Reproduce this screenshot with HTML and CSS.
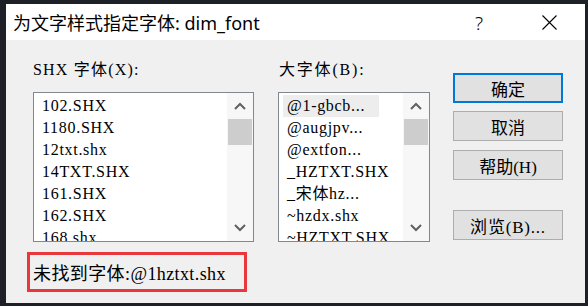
FILE: index.html
```html
<!DOCTYPE html>
<html lang="zh-CN">
<head>
    <meta charset="UTF-8">
    <title>为文字样式指定字体</title>
    <link rel="stylesheet" href="styles.css">
</head>
<body>
    <div class="window">
        <div class="titlebar">
            <span class="title">为文字样式指定字体: dim_font</span>
            <span class="title-btn help">?</span>
            <span class="title-btn close">
                <svg width="15" height="15" viewBox="0 0 15 15">
                    <path d="M0.5 0.5 L14.5 14.5 M14.5 0.5 L0.5 14.5" stroke="#000" stroke-width="1.1" fill="none"/>
                </svg>
            </span>
        </div>

        <div class="content">
            <div class="main">
                <div class="group group-shx">
                    <div class="label">SHX 字体(X):</div>
                    <div class="listbox">
                        <ul class="items">
                            <li>102.SHX</li>
                            <li>1180.SHX</li>
                            <li>12txt.shx</li>
                            <li>14TXT.SHX</li>
                            <li>161.SHX</li>
                            <li>162.SHX</li>
                            <li>168.shx</li>
                        </ul>
                        <div class="scrollbar">
                            <div class="arrow">
                                <svg width="12" height="8" viewBox="0 0 12 8"><polyline points="1,7 6,2 11,7" fill="none" stroke="#606060" stroke-width="2"/></svg>
                            </div>
                            <div class="thumb"></div>
                            <div class="track"></div>
                            <div class="arrow">
                                <svg width="12" height="8" viewBox="0 0 12 8"><polyline points="1,1 6,6 11,1" fill="none" stroke="#606060" stroke-width="2"/></svg>
                            </div>
                        </div>
                    </div>
                </div>

                <div class="group group-big">
                    <div class="label">大字体(B):</div>
                    <div class="listbox">
                        <ul class="items">
                            <li class="selected">@1-gbcb...</li>
                            <li>@augjpv...</li>
                            <li>@extfon...</li>
                            <li>_HZTXT.SHX</li>
                            <li>_宋体hz...</li>
                            <li>~hzdx.shx</li>
                            <li>~HZTXT.SHX</li>
                        </ul>
                        <div class="scrollbar">
                            <div class="arrow">
                                <svg width="12" height="8" viewBox="0 0 12 8"><polyline points="1,7 6,2 11,7" fill="none" stroke="#606060" stroke-width="2"/></svg>
                            </div>
                            <div class="thumb"></div>
                            <div class="track"></div>
                            <div class="arrow">
                                <svg width="12" height="8" viewBox="0 0 12 8"><polyline points="1,1 6,6 11,1" fill="none" stroke="#606060" stroke-width="2"/></svg>
                            </div>
                        </div>
                    </div>
                </div>

                <div class="buttons">
                    <button class="btn default">确定</button>
                    <button class="btn btn-cancel">取消</button>
                    <button class="btn btn-help">帮助(H)</button>
                    <button class="btn btn-browse">浏览(B)...</button>
                </div>
            </div>

            <div class="status">未找到字体:@1hztxt.shx</div>
        </div>
    </div>
</body>
</html>
```

FILE: styles.css
```css
* {
    margin: 0;
    padding: 0;
    box-sizing: border-box;
}

body {
    background-color: #1d2127;
    width: 588px;
    height: 306px;
    overflow: hidden;
    font-family: 'Liberation Serif', 'Noto Sans CJK SC', serif;
    color: #000;
}

.window {
    width: 579px;
    height: 299px;
    margin: 4px 0 0 6px;
    display: flex;
    flex-direction: column;
    background: #f0f0f0;
}

.titlebar {
    height: 36px;
    background: #ffffff;
    display: flex;
    align-items: center;
    padding: 0 13px 0 7px;
    font-family: 'Noto Sans', 'Noto Sans CJK SC', sans-serif;
}

.title {
    font-size: 18px;
    flex: 1;
}

.title-btn {
    width: 46px;
    height: 36px;
    display: flex;
    align-items: center;
    justify-content: center;
}

.help {
    font-size: 19px;
    font-weight: 300;
    padding-top: 1px;
    margin-right: 24px;
}

.content {
    flex: 1;
    padding-top: 20px;
}

.main {
    display: flex;
    padding-left: 27px;
}

.label {
    font-size: 16px;
    line-height: 20px;
    height: 20px;
    margin-bottom: 12px;
    white-space: pre;
    letter-spacing: 1.2px;
}

.group-shx {
    width: 221px;
}

.group-big {
    width: 152px;
    margin-left: 24px;
}

.group-big .label {
    padding-left: 1px;
    letter-spacing: 1.8px;
}

.listbox {
    height: 150px;
    border: 1px solid #828790;
    background: #ffffff;
    display: flex;
    overflow: hidden;
}

.items {
    list-style: none;
    flex: 1;
    padding: 2px 0 0 4px;
    overflow: hidden;
}

.items li {
    font-size: 16px;
    line-height: 22px;
    height: 22px;
    padding-left: 4px;
    white-space: nowrap;
    letter-spacing: 0.7px;
}

.items li.selected {
    width: 96px;
    background: #ededed;
}

.scrollbar {
    width: 26px;
    display: flex;
    flex-direction: column;
    background: #f7f7f7;
    padding-right: 1px;
}

.arrow {
    height: 26px;
    display: flex;
    align-items: center;
    justify-content: center;
}

.thumb {
    height: 26px;
    margin-left: 1px;
    background: #cdcdcd;
}

.track {
    flex: 1;
}

.buttons {
    display: flex;
    flex-direction: column;
    margin: 13px 0 0 23px;
}

.btn {
    width: 110px;
    height: 30px;
    background: #e1e1e1;
    border: 1px solid #adadad;
    font-family: 'Liberation Serif', 'Noto Sans CJK SC', serif;
    font-size: 17px;
    color: #000;
}

.btn.default {
    border: 2px solid #0078d7;
}

.btn-cancel {
    margin-top: 8px;
}

.btn-help {
    margin-top: 9px;
}

.btn-browse {
    margin-top: 30px;
    letter-spacing: 0.8px;
}

.status {
    width: 220px;
    height: 40px;
    margin: 10px 0 0 21px;
    border: 3px solid #e8383c;
    padding-left: 3px;
    display: flex;
    align-items: center;
    font-size: 18px;
    letter-spacing: 0.4px;
}
```
